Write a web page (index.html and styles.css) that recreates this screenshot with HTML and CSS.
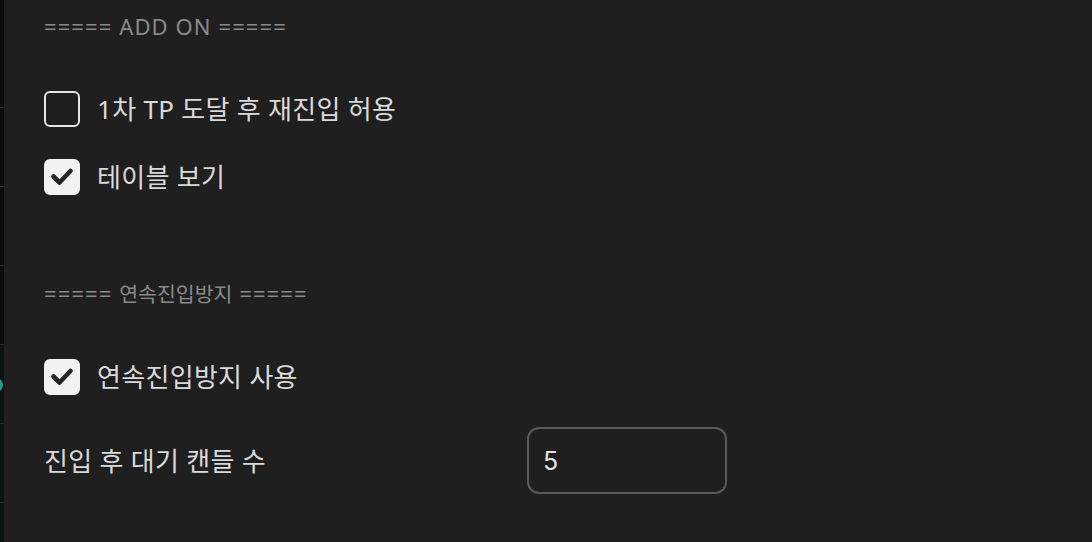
FILE: index.html
```html
<!DOCTYPE html>
<html lang="ko">
<head>
    <meta charset="UTF-8">
    <meta name="viewport" content="width=device-width, initial-scale=1.0">
    <title>Strategy Settings</title>
    <link rel="stylesheet" href="styles.css">
</head>
<body>
    <div class="chart-edge">
        <span class="edge-dot"></span>
    </div>

    <div class="settings-panel">
        <div class="section-title">===== ADD ON =====</div>

        <label class="option option-first">
            <span class="checkbox"></span>
            <span class="option-label">1차 TP 도달 후 재진입 허용</span>
        </label>

        <label class="option">
            <span class="checkbox checked">
                <svg viewBox="0 0 36 36" width="36" height="36">
                    <path d="M9.5 17.5 L15.5 23.5 L26.5 12" fill="none" stroke="#262626" stroke-width="4.6" stroke-linecap="round" stroke-linejoin="round"/>
                </svg>
            </span>
            <span class="option-label">테이블 보기</span>
        </label>

        <div class="section-title section-gap">===== <span class="ko">연속진입방지</span> =====</div>

        <label class="option option-first">
            <span class="checkbox checked">
                <svg viewBox="0 0 36 36" width="36" height="36">
                    <path d="M9.5 17.5 L15.5 23.5 L26.5 12" fill="none" stroke="#262626" stroke-width="4.6" stroke-linecap="round" stroke-linejoin="round"/>
                </svg>
            </span>
            <span class="option-label">연속진입방지 사용</span>
        </label>

        <div class="field">
            <span class="field-label">진입 후 대기 캔들 수</span>
            <input class="field-input" type="text" value="5">
        </div>
    </div>
</body>
</html>
```

FILE: styles.css
```css
* {
    margin: 0;
    padding: 0;
    box-sizing: border-box;
}

body {
    font-family: 'Noto Sans', 'Noto Sans CJK KR', sans-serif;
    background: #1f1f1f;
    color: #dadada;
    height: 100vh;
    display: flex;
    overflow: hidden;
}

/* sliver of the chart behind the dialog */
.chart-edge {
    position: relative;
    width: 4px;
    flex-shrink: 0;
    background:
        repeating-linear-gradient(180deg, transparent 0, transparent 78px, #2c2c2c 78px, #2c2c2c 79px) 0 29px / 100% 100% no-repeat,
        linear-gradient(180deg, #0b0b0b 0, #0b0b0b 345px, #0c1211 345px, #0c1211 100%);
}

.edge-dot {
    position: absolute;
    left: -11px;
    top: 378px;
    width: 14px;
    height: 14px;
    border-radius: 50%;
    background: #22a08f;
}

.settings-panel {
    flex: 1;
    padding: 14px 40px 0 40px;
    display: flex;
    flex-direction: column;
}

.section-title {
    font-size: 22px;
    line-height: 24px;
    color: #8a8a8a;
    letter-spacing: 1.1px;
}

.section-title .ko {
    font-size: 20.5px;
    letter-spacing: 0;
}

.section-gap {
    margin-top: 86px;
}

.option {
    display: flex;
    align-items: center;
    gap: 17px;
    height: 36px;
    margin-top: 32px;
    cursor: pointer;
}

.option-first {
    margin-top: 53px;
}

.checkbox {
    width: 36px;
    height: 36px;
    border: 2px solid #e6e6e6;
    border-radius: 6px;
    flex-shrink: 0;
    display: flex;
    align-items: center;
    justify-content: center;
}

.checkbox.checked {
    background: #f2f2f2;
    border-color: #f2f2f2;
}

.checkbox svg {
    display: block;
    flex-shrink: 0;
}

.option-label,
.field-label {
    font-size: 26px;
    line-height: 36px;
    letter-spacing: 0.3px;
    color: #dadada;
}

.field {
    display: flex;
    align-items: center;
    margin-top: 32px;
    height: 67px;
}

.field-label {
    width: 483px;
}

.field-input {
    width: 200px;
    height: 67px;
    background: transparent;
    border: 2px solid #5a5a5a;
    border-radius: 12px;
    color: #e2e2e2;
    font-family: 'Inter', 'Noto Sans', sans-serif;
    font-size: 25px;
    padding: 0 14px;
    outline: none;
}
```
